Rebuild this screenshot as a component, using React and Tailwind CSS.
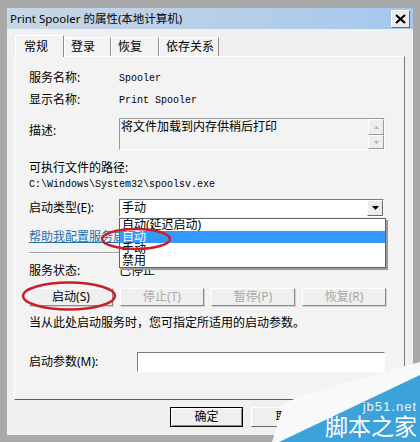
import React from 'react';

const cjk = "font-['Noto_Sans','Noto_Sans_CJK_SC',sans-serif]";
const mono = "font-['Liberation_Mono','Noto_Sans_CJK_SC',monospace]";

const Btn = ({ label, disabled, className = '' }) => (
  <div
    className={`h-[18px] w-[84px] flex items-center justify-center border border-t-white border-l-white border-r-[#8a8a8a] border-b-[#8a8a8a] bg-[#efefef] shadow-[1px_1px_0_#d0d0d0] text-[12px] leading-none ${
      disabled ? 'text-[#a8a8a8]' : 'text-black'
    } ${className}`}
  >
    {label}
  </div>
);

const Tab = ({ label, selected, w }) => (
  <div
    className={`flex items-center pl-[6px] border-t border-l border-r border-t-white border-l-white border-r-[#8c8c8c] bg-[#f3f3f3] text-[12px] ${
      selected ? 'h-[22px] -mb-px relative z-10 pl-[8px]' : 'h-[19px]'
    }`}
    style={{ width: w }}
  >
    {label}
  </div>
);

export default function App() {
  return (
    <div className={`relative w-[420px] h-[442px] overflow-hidden bg-[#a9a9a9] pt-[8px] px-[7px] pb-[7px] text-black ${cjk}`}>
      <div className="h-full flex flex-col bg-[#f0f0f0]">
        {/* title bar */}
        <div className="h-[21px] flex items-center justify-between pl-[3px] pr-[3px] bg-gradient-to-r from-[#c9d6e4] via-[#b8cfe8] to-[#a4c7ee]">
          <span className="text-[11.5px] leading-none">Print Spooler 的属性(本地计算机)</span>
          <div className="w-[19px] h-[18px] flex items-center justify-center border border-t-white border-l-white border-r-[#6a6a6a] border-b-[#6a6a6a] bg-[#ececec]">
            <svg width="11" height="10" viewBox="0 0 11 10">
              <path d="M1 1 L10 9 M10 1 L1 9" stroke="#000" strokeWidth="2.2" />
            </svg>
          </div>
        </div>

        <div className="pl-[7px] pt-[6px] flex flex-col">
          {/* tabs */}
          <div className="flex items-end h-[21px] ml-[1px]">
            <Tab label="常规" selected w={49} />
            <Tab label="登录" w={47} />
            <Tab label="恢复" w={48} />
            <Tab label="依存关系" w={60} />
          </div>

          {/* panel */}
          <div className="w-[391px] h-[344px] border border-t-white border-l-white border-r-[#7a7a7a] border-b-[#5a5a5a] bg-[#f3f3f3] pl-[14px] pt-[13px] flex flex-col text-[12px]">
            <div className="flex items-center h-[16px]">
              <span className="w-[90px]">服务名称:</span>
              <span className={`${mono} text-[10px]`}>Spooler</span>
            </div>
            <div className="flex items-center h-[16px] mt-[6px]">
              <span className="w-[90px]">显示名称:</span>
              <span className={`${mono} text-[10px]`}>Print Spooler</span>
            </div>
            <div className="flex items-start mt-[10px]">
              <span className="w-[90px] mt-[4px]">描述:</span>
              <div className="w-[266px] h-[32px] flex border border-[#9a9a9a] border-b-white border-r-white bg-[#f3f3f3]">
                <div className="flex-1 pl-[1px] leading-[15px] text-[12px]">将文件加载到内存供稍后打印</div>
                <div className="w-[16px] flex flex-col">
                  <div className="h-[16px] flex items-center justify-center border border-t-white border-l-white border-r-[#9a9a9a] border-b-[#9a9a9a] bg-[#ededed]">
                    <svg width="5" height="3" viewBox="0 0 5 3"><path d="M0 3 L2.5 0 L5 3 Z" fill="#b0b0b0" /></svg>
                  </div>
                  <div className="h-[14px] flex items-center justify-center border border-t-white border-l-white border-r-[#9a9a9a] border-b-[#9a9a9a] bg-[#ededed]">
                    <svg width="5" height="3" viewBox="0 0 5 3"><path d="M0 0 L2.5 3 L5 0 Z" fill="#b0b0b0" /></svg>
                  </div>
                </div>
              </div>
            </div>
            <div className="h-[16px] mt-[10px] flex items-center">可执行文件的路径:</div>
            <div className={`h-[16px] flex items-center ${mono} text-[10px]`}>C:\Windows\System32\spoolsv.exe</div>
            <div className="flex items-center mt-[7px]">
              <span className="w-[90px]">启动类型(E):</span>
              <div className="w-[265px] h-[18px] flex items-center border border-[#7a7a7a] border-b-white border-r-white bg-white">
                <span className="flex-1 pl-[2px] leading-none">手动</span>
                <div className="w-[16px] h-[16px] flex items-center justify-center border border-t-white border-l-white border-r-[#6a6a6a] border-b-[#6a6a6a] bg-[#ececec]">
                  <svg width="7" height="4" viewBox="0 0 7 4"><path d="M0 0 L7 0 L3.5 4 Z" fill="#000" /></svg>
                </div>
              </div>
            </div>
            <div className="h-[16px] mt-[12px] flex items-center">
              <span className="text-[#1f6fae] underline">帮助我配置服务启动选项。</span>
            </div>
            <div className="w-[356px] mt-[7px] border-t border-[#a0a0a0] border-b border-b-white" />
            <div className="flex items-center h-[16px] mt-[9px]">
              <span className="w-[90px]">服务状态:</span>
              <span>已停止</span>
            </div>
            <div className="flex gap-[7px] mt-[9px]">
              <Btn label="启动(S)" />
              <Btn label="停止(T)" disabled />
              <Btn label="暂停(P)" disabled />
              <Btn label="恢复(R)" disabled />
            </div>
            <div className="h-[16px] mt-[9px] flex items-center">当从此处启动服务时，您可指定所适用的启动参数。</div>
            <div className="flex items-center mt-[21px]">
              <span className="w-[108px]">启动参数(M):</span>
              <div className="w-[248px] h-[20px] border border-[#7a7a7a] border-b-white border-r-white bg-white" />
            </div>
          </div>

          {/* bottom buttons */}
          <div className="flex justify-end gap-[8px] mt-[7px] w-[391px]">
            <div className="w-[73px] h-[20px] flex items-center justify-center border border-black bg-[#efefef] shadow-[inset_1px_1px_0_#fff,inset_-1px_-1px_0_#8a8a8a] text-[12px]">确定</div>
            <div className="w-[73px] h-[20px] flex items-center justify-center border border-t-white border-l-white border-r-[#6a6a6a] border-b-[#6a6a6a] bg-[#efefef] text-[12px]">取消</div>
            <div className="w-[73px] h-[20px] border border-t-white border-l-white border-r-[#6a6a6a] border-b-[#6a6a6a] bg-[#efefef]" />
          </div>
        </div>
      </div>

      {/* open dropdown list */}
      <div className="absolute left-[119px] top-[218px] w-[267px] h-[50px] border border-[#646464] bg-white shadow-[2px_2px_0_#9a9a9a] text-[12px] flex flex-col">
        <div className="h-[12px] leading-[12px] pl-[2px]">自动(延迟启动)</div>
        <div className="h-[12px] leading-[12px] pl-[2px] bg-[#3399ff] text-white">自动</div>
        <div className="h-[12px] leading-[12px] pl-[2px]">手动</div>
        <div className="h-[12px] leading-[12px] pl-[2px]">禁用</div>
      </div>

      {/* red annotation ellipses */}
      <svg className="absolute left-0 top-0 pointer-events-none" width="420" height="442">
        <ellipse cx="136" cy="239" rx="34" ry="10" fill="none" stroke="#c8202a" strokeWidth="2.5" />
        <ellipse cx="69" cy="296" rx="46" ry="13.5" fill="none" stroke="#c8202a" strokeWidth="2.5" />
      </svg>

      {/* watermark */}
      <svg className="absolute left-0 top-0 pointer-events-none" width="420" height="442">
        <polygon points="272,442 284,404 300,396 420,362 420,442" fill="#f7f9fb" />
        <polygon points="279,442 420,375 420,442" fill="#3ba3d9" />
      </svg>
      <div className="absolute right-[3px] top-[400px] text-[13px] leading-[13px] tracking-[1px] text-[#e8f4fb] font-['Liberation_Sans',sans-serif]">jb51.net</div>
      <div className="absolute right-[3px] top-[414px] text-[23px] leading-[24px] text-white">脚本之家</div>
    </div>
  );
}
